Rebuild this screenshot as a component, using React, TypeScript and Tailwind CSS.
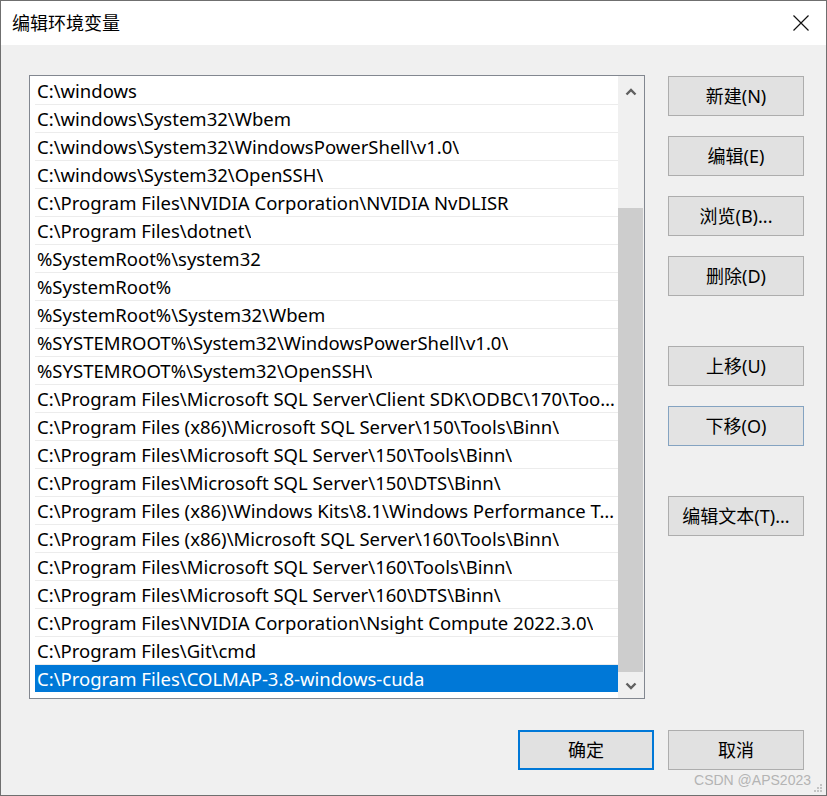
import React from 'react';

const PATHS = [
  'C:\\windows',
  'C:\\windows\\System32\\Wbem',
  'C:\\windows\\System32\\WindowsPowerShell\\v1.0\\',
  'C:\\windows\\System32\\OpenSSH\\',
  'C:\\Program Files\\NVIDIA Corporation\\NVIDIA NvDLISR',
  'C:\\Program Files\\dotnet\\',
  '%SystemRoot%\\system32',
  '%SystemRoot%',
  '%SystemRoot%\\System32\\Wbem',
  '%SYSTEMROOT%\\System32\\WindowsPowerShell\\v1.0\\',
  '%SYSTEMROOT%\\System32\\OpenSSH\\',
  'C:\\Program Files\\Microsoft SQL Server\\Client SDK\\ODBC\\170\\Tools\\Binn\\',
  'C:\\Program Files (x86)\\Microsoft SQL Server\\150\\Tools\\Binn\\',
  'C:\\Program Files\\Microsoft SQL Server\\150\\Tools\\Binn\\',
  'C:\\Program Files\\Microsoft SQL Server\\150\\DTS\\Binn\\',
  'C:\\Program Files (x86)\\Windows Kits\\8.1\\Windows Performance Toolkit\\',
  'C:\\Program Files (x86)\\Microsoft SQL Server\\160\\Tools\\Binn\\',
  'C:\\Program Files\\Microsoft SQL Server\\160\\Tools\\Binn\\',
  'C:\\Program Files\\Microsoft SQL Server\\160\\DTS\\Binn\\',
  'C:\\Program Files\\NVIDIA Corporation\\Nsight Compute 2022.3.0\\',
  'C:\\Program Files\\Git\\cmd',
  'C:\\Program Files\\COLMAP-3.8-windows-cuda',
];

const SELECTED = PATHS.length - 1;

/* ---------- small pieces ---------- */

function Chevron({ down = false }: { down?: boolean }) {
  return (
    <svg width="12" height="8" viewBox="0 0 12 8" className="block">
      <path
        d={down ? 'M1.5 1.5 L6 6 L10.5 1.5' : 'M1.5 6.5 L6 2 L10.5 6.5'}
        fill="none"
        stroke="#606060"
        strokeWidth="2.4"
      />
    </svg>
  );
}

function Btn({ label, hover = false, primary = false }: { label: string; hover?: boolean; primary?: boolean }) {
  const border = primary
    ? 'border-2 border-[#0078d7]'
    : hover
      ? 'border border-[#84a3c1]'
      : 'border border-[#adadad]';
  return (
    <div
      className={`flex h-[40px] w-[136px] items-center justify-center ${border} ${
        hover ? 'bg-[#e3e3e3]' : 'bg-[#e1e1e1]'
      } text-[18px] leading-[24px] text-black`}
    >
      {label}
    </div>
  );
}

/* ---------- list box ---------- */

function PathList() {
  return (
    <div className="flex h-[624px] w-[616px] border border-[#828790] bg-white">
      <div className="flex-1 overflow-hidden pl-[5px] pt-[1px]">
        {PATHS.map((p, i) => (
          <div
            key={i}
            className={`h-[28px] ${i === SELECTED ? '' : 'border-b border-[#ececec]'}`}
          >
            <div
              className={`flex h-[27px] items-center overflow-hidden pl-[2px] pr-[3px] ${
                i === SELECTED ? 'bg-[#0078d7] text-white' : 'text-black'
              }`}
            >
              <span className="block overflow-hidden text-ellipsis whitespace-nowrap text-[18.5px] leading-[25px]">
                {p}
              </span>
            </div>
          </div>
        ))}
      </div>

      {/* scrollbar */}
      <div className="flex w-[26px] flex-col bg-[#f0f0f0]">
        <div className="flex h-[26px] items-end justify-center pb-[6px] pr-[1px]">
          <Chevron />
        </div>
        <div className="h-[106px]" />
        <div className="mr-[1px] h-[464px] bg-[#cdcdcd]" />
        <div className="flex flex-1 items-center justify-center pr-[1px] pt-[2px]">
          <Chevron down />
        </div>
      </div>
    </div>
  );
}

/* ---------- dialog ---------- */

export default function App() {
  return (
    <div
      className="relative flex h-[796px] w-[827px] flex-col border border-[#6f6f6f] bg-[#f0f0f0]"
      style={{ fontFamily: '"Noto Sans", "Noto Sans CJK SC", sans-serif' }}
    >
      {/* Title bar */}
      <div className="flex h-[44px] items-center justify-between bg-white">
        <span className="pl-[11px] text-[18px] leading-[24px] text-black">编辑环境变量</span>
        <svg width="16" height="16" viewBox="0 0 16 16" className="mr-[17px]">
          <path d="M0.5 0.5 L15.5 15.5 M15.5 0.5 L0.5 15.5" stroke="#111" strokeWidth="1.2" />
        </svg>
      </div>

      {/* Body */}
      <div className="flex flex-1 flex-col pl-[28px] pr-[22px] pt-[30px]">
        <div className="flex gap-[23px]">
          <PathList />
          <div className="flex flex-col pt-[1px]">
            <div className="flex flex-col gap-[20px]">
              <Btn label="新建(N)" />
              <Btn label="编辑(E)" />
              <Btn label="浏览(B)..." />
              <Btn label="删除(D)" />
            </div>
            <div className="mt-[50px] flex flex-col gap-[20px]">
              <Btn label="上移(U)" />
              <Btn label="下移(O)" hover />
            </div>
            <div className="mt-[50px]">
              <Btn label="编辑文本(T)..." />
            </div>
          </div>
        </div>

        <div className="mt-[31px] flex justify-end gap-[14px]">
          <Btn label="确定" primary />
          <Btn label="取消" />
        </div>
      </div>

      {/* watermark + size grip */}
      <span
        className="absolute bottom-[7px] right-[15px] text-[14px] leading-[16px] text-[#b4b4b4]"
        style={{ fontFamily: '"Liberation Sans", Arial, sans-serif' }}
      >
        CSDN @APS2023
      </span>
      <svg width="10" height="10" viewBox="0 0 10 10" className="absolute bottom-[2px] right-[3px]">
        <rect x="7" y="1" width="2" height="2" fill="#c4c4c4" />
        <rect x="4" y="4" width="2" height="2" fill="#c4c4c4" />
        <rect x="7" y="4" width="2" height="2" fill="#c4c4c4" />
        <rect x="1" y="7" width="2" height="2" fill="#c4c4c4" />
        <rect x="4" y="7" width="2" height="2" fill="#c4c4c4" />
        <rect x="7" y="7" width="2" height="2" fill="#c4c4c4" />
      </svg>
    </div>
  );
}
